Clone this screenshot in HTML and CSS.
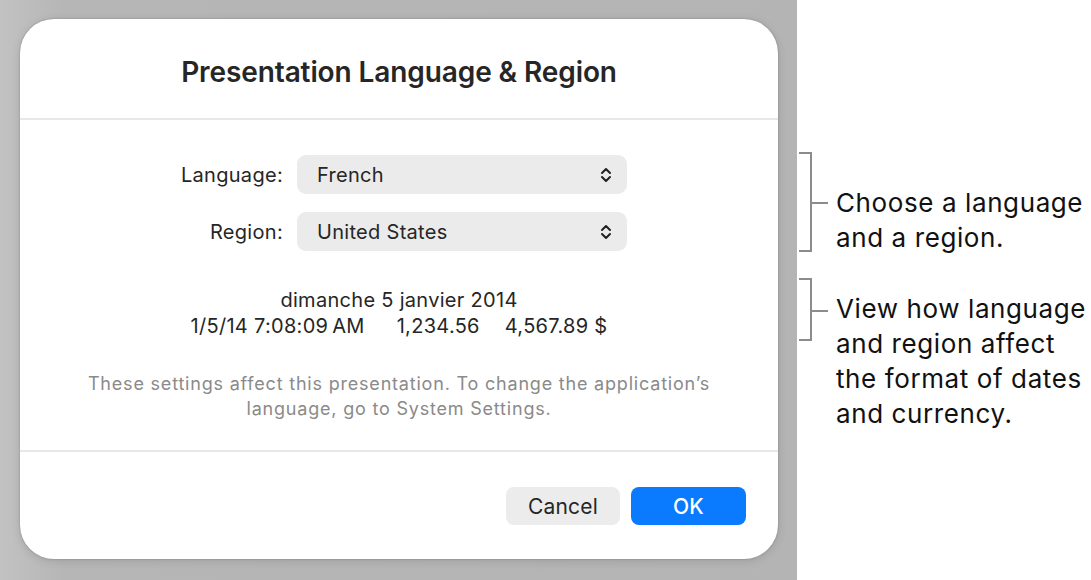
FILE: index.html
```html
<!DOCTYPE html>
<html>
<head>
  <meta charset="UTF-8">
  <title>Presentation Language &amp; Region</title>
  <link rel="stylesheet" href="styles.css">
</head>
<body>
  <div id="backdrop">
    <div id="dialog">
      <div class="dlg-header">Presentation Language &amp; Region</div>

      <div class="dlg-body">
        <div class="form">
          <label>Language:</label>
          <div class="popup">
            <span>French</span>
            <svg width="12" height="16" viewBox="0 0 12 16"><path d="M2 6 L6 2 L10 6 M2 10 L6 14 L10 10" fill="none" stroke="#222" stroke-width="2" stroke-linecap="round" stroke-linejoin="round"/></svg>
          </div>
          <label>Region:</label>
          <div class="popup">
            <span>United States</span>
            <svg width="12" height="16" viewBox="0 0 12 16"><path d="M2 6 L6 2 L10 6 M2 10 L6 14 L10 10" fill="none" stroke="#222" stroke-width="2" stroke-linecap="round" stroke-linejoin="round"/></svg>
          </div>
        </div>

        <div class="preview">
          <div>dimanche 5 janvier 2014</div>
          <div><span>1/5/14 7:08:09&#8239;AM</span><span class="num">1,234.56</span><span class="cur">4,567.89 $</span></div>
        </div>

        <p class="note">These settings affect this presentation. To change the application’s<br>language, go to System Settings.</p>
      </div>

      <div class="dlg-footer">
        <button class="btn-cancel">Cancel</button>
        <button class="btn-ok">OK</button>
      </div>
    </div>
  </div>

  <div id="callouts">
    <div class="callout first">
      <div class="bracket tall"></div>
      <div class="callout-text">Choose a language<br>and a region.</div>
    </div>
    <div class="callout second">
      <div class="bracket short"></div>
      <div class="callout-text">View how language<br>and region affect<br>the format of dates<br>and currency.</div>
    </div>
  </div>
</body>
</html>
```

FILE: styles.css
```css
body {
  margin: 0;
  font-family: Inter, "Liberation Sans", sans-serif;
  display: flex;
  height: 580px;
  overflow: hidden;
  background: #fff;
}
#backdrop {
  width: 797px;
  height: 580px;
  box-sizing: border-box;
  padding: 19px 0 0 20px;
  background: linear-gradient(90deg, #c2c2c2 0%, #b6b6b6 8%, #b4b4b4 100%);
}
#dialog {
  width: 758px;
  height: 540px;
  background: #fff;
  border-radius: 34px;
  box-shadow: 0 0 2px rgba(0,0,0,0.25), 0 2px 10px rgba(0,0,0,0.12);
  display: flex;
  flex-direction: column;
  color: #262626;
}
.dlg-header {
  height: 101px;
  border-bottom: 2px solid #e8e8e8;
  display: flex;
  align-items: center;
  justify-content: center;
  font-size: 28px;
  font-weight: 600;
  letter-spacing: -0.1px;
  padding-top: 6px;
  box-sizing: border-box;
}
.dlg-body {
  height: 332px;
  border-bottom: 2px solid #e8e8e8;
  box-sizing: border-box;
  padding-top: 35px;
}
.form {
  display: grid;
  grid-template-columns: 263px 330px;
  column-gap: 14px;
  row-gap: 18px;
  align-items: center;
}
.form label {
  text-align: right;
  font-size: 20px;
  letter-spacing: 0.3px;
}
.popup {
  height: 39px;
  background: #ebebeb;
  border-radius: 9px;
  display: flex;
  align-items: center;
  justify-content: space-between;
  padding: 0 15px 0 20px;
  font-size: 20px;
  letter-spacing: 0.3px;
}
.popup svg { margin-top: 1px; }
.preview {
  margin-top: 36px;
  text-align: center;
  font-size: 20px;
  line-height: 26px;
  letter-spacing: 0.3px;
}
.preview .num { margin-left: 32px; }
.preview .cur { margin-left: 25px; }
.note {
  margin: 32px 0 0;
  text-align: center;
  font-size: 18px;
  line-height: 25px;
  letter-spacing: 0.8px;
  color: #8a8a8a;
}
.dlg-footer {
  flex: 1;
  display: flex;
  justify-content: flex-end;
  align-items: flex-start;
  gap: 11px;
  padding: 35px 32px 0 0;
}
.dlg-footer button {
  height: 38px;
  width: 114px;
  border: none;
  border-radius: 8px;
  font-family: inherit;
  font-size: 21px;
  letter-spacing: 0.2px;
}
.btn-cancel {
  background: #ececec;
  color: #262626;
}
.btn-ok {
  background: #0a7aff;
  color: #fff;
  font-weight: 500;
  width: 115px !important;
}
#callouts {
  flex: 1;
  padding: 152px 0 0 2px;
  display: flex;
  flex-direction: column;
}
.callout {
  display: flex;
  align-items: flex-start;
}
.callout.second { margin-top: 23px; }
.bracket {
  width: 13px;
  box-sizing: border-box;
  border: 2px solid #8c8c8c;
  border-left: none;
  position: relative;
  flex-shrink: 0;
}
.bracket.tall { height: 100px; }
.bracket.short { height: 63px; }
.bracket::after {
  content: "";
  position: absolute;
  left: 100%;
  width: 18px;
  height: 2px;
  background: #8c8c8c;
}
.bracket.tall::after { top: 48px; }
.bracket.short::after { top: 30px; }
.callout-text {
  margin-left: 24px;
  font-size: 26px;
  line-height: 35px;
  letter-spacing: 0.6px;
  color: #111;
  white-space: nowrap;
}
.first .callout-text { margin-top: 33px; }
.second .callout-text { margin-top: 13px; }
```
